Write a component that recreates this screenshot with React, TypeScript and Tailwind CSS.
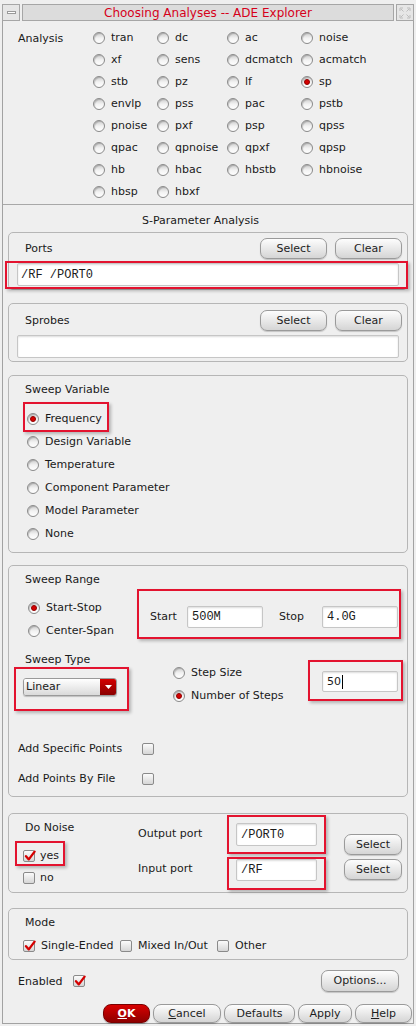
import React from "react";

const ANALYSES: { name: string; on?: boolean }[][] = [
  [{ name: "tran" }, { name: "dc" }, { name: "ac" }, { name: "noise" }],
  [{ name: "xf" }, { name: "sens" }, { name: "dcmatch" }, { name: "acmatch" }],
  [{ name: "stb" }, { name: "pz" }, { name: "lf" }, { name: "sp", on: true }],
  [{ name: "envlp" }, { name: "pss" }, { name: "pac" }, { name: "pstb" }],
  [{ name: "pnoise" }, { name: "pxf" }, { name: "psp" }, { name: "qpss" }],
  [{ name: "qpac" }, { name: "qpnoise" }, { name: "qpxf" }, { name: "qpsp" }],
  [{ name: "hb" }, { name: "hbac" }, { name: "hbstb" }, { name: "hbnoise" }],
  [{ name: "hbsp" }, { name: "hbxf" }],
];

const SWEEP_VARS = ["Frequency", "Design Variable", "Temperature", "Component Parameter", "Model Parameter", "None"];

function Radio({ on }: { on?: boolean }) {
  return (
    <span className="w-[12px] h-[12px] shrink-0 rounded-full border border-[#8a8a8a] bg-linear-to-b from-[#cdcdcd] via-[#f2f2f2] to-white shadow-[inset_1px_1px_1px_rgba(0,0,0,0.18)] flex items-center justify-center">
      {on && <span className="w-[6px] h-[6px] rounded-full bg-[#d60000] border border-[#900000]" />}
    </span>
  );
}

function Check({ on }: { on?: boolean }) {
  return (
    <span className="relative w-[12px] h-[12px] shrink-0 rounded-[2px] border border-[#8a8a8a] bg-linear-to-b from-[#fbfbfb] to-[#d6d6d6]">
      {on && (
        <svg className="absolute left-[0px] top-[-1px]" width="12" height="12" viewBox="0 0 12 12">
          <path d="M2 6.2 L4.8 9.4 L10.6 1.6" stroke="#d40000" strokeWidth="2.3" fill="none" strokeLinecap="round" strokeLinejoin="round" />
        </svg>
      )}
    </span>
  );
}

function Btn({ children, className = "" }: { children: React.ReactNode; className?: string }) {
  return (
    <div
      className={
        "flex items-center justify-center rounded-[7px] border border-[#9a9a9a] bg-linear-to-b from-[#fdfdfd] to-[#d5d5d5] shadow-[0_1px_1px_rgba(0,0,0,0.18)] text-[#1e1e1e] " +
        className
      }
    >
      {children}
    </div>
  );
}

function Field({ children, className = "", mono = true }: { children?: React.ReactNode; className?: string; mono?: boolean }) {
  return (
    <div
      className={
        "flex items-center pl-[3px] bg-white border border-[#c6c6c6] rounded-[2px] shadow-[inset_0_1px_2px_rgba(0,0,0,0.14)] " +
        (mono ? "font-['Liberation_Mono',monospace] text-[12px] " : "") +
        className
      }
    >
      {children}
    </div>
  );
}

function Annot({ className }: { className: string }) {
  return <span className={"pointer-events-none absolute border-2 border-[#e3132f] shadow-[2px_2px_3px_rgba(0,0,0,0.25)] " + className} />;
}

function Frame({ children, className = "" }: { children: React.ReactNode; className?: string }) {
  return <div className={"mx-[5px] border border-[#b6b6b6] rounded-[5px] " + className}>{children}</div>;
}

export default function App() {
  return (
    <div className="w-[416px] h-[1026px] bg-[#efefef] font-['DejaVu_Sans',sans-serif] text-[11px] leading-[14px] text-[#1a1a1a] flex flex-col">
      {/* Title bar */}
      <div className="flex h-[17px] mt-[4px] mx-[2px] gap-[2px]">
        <div className="w-[18px] border border-[#a6a6a6] bg-[#e6e6e6] flex items-center justify-center">
          <div className="w-[9px] h-[3px] border border-[#9a9a9a] bg-white" />
        </div>
        <div className="flex-1 border border-[#a6a6a6] bg-[#dcdcdc] flex items-center justify-center text-[12px] text-[#d6001a]">
          Choosing Analyses -- ADE Explorer
        </div>
        <div className="w-[18px] border border-[#a6a6a6] bg-[#e6e6e6] flex items-center justify-center">
          <svg width="12" height="12" viewBox="0 0 12 12" fill="none" stroke="#bdbdbd" strokeWidth="1">
            <path d="M1 4 V1 H4 M8 1 H11 V4 M11 8 V11 H8 M4 11 H1 V8 M2 2 L4.5 4.5 M10 2 L7.5 4.5 M10 10 L7.5 7.5 M2 10 L4.5 7.5" />
          </svg>
        </div>
      </div>

      {/* Window body */}
      <div className="mx-[2px] h-[1003px] border-x border-b border-[#a2a2a2] flex flex-col">
        {/* Analysis */}
        <div className="h-[184px] pt-[6px] border-b border-[#a8a8a8] flex">
          <div className="w-[90px] pl-[15px] h-[22px] flex items-center pt-[1px]">Analysis</div>
          <div className="grid grid-cols-[64px_70px_74px_auto] auto-rows-[22px]">
            {ANALYSES.flat().map((a) => (
              <div key={a.name} className="flex items-center gap-[6px]">
                <Radio on={a.on} />
                <span>{a.name}</span>
              </div>
            ))}
          </div>
        </div>

        <div className="pt-[9px] pr-[15px] text-center">S-Parameter Analysis</div>

        {/* Ports */}
        <Frame className="mt-[4px] pt-[5px] pb-[3px]">
          <div className="flex items-center h-[21px] pl-[16px] pr-[5px]">
            <span className="flex-1">Ports</span>
            <div className="flex gap-[8px]">
              <Btn className="w-[67px] h-[21px]">Select</Btn>
              <Btn className="w-[67px] h-[21px]">Clear</Btn>
            </div>
          </div>
          <div className="relative mt-[4px] mx-[8px]">
            <Field className="h-[23px]">/RF /PORT0</Field>
            <Annot className="-left-[12px] -top-[2px] w-[403px] h-[28px]" />
          </div>
        </Frame>

        {/* Sprobes */}
        <Frame className="mt-[13px] pt-[6px] pb-[3px]">
          <div className="flex items-center h-[21px] pl-[16px] pr-[5px]">
            <span className="flex-1">Sprobes</span>
            <div className="flex gap-[8px]">
              <Btn className="w-[67px] h-[21px]">Select</Btn>
              <Btn className="w-[67px] h-[21px]">Clear</Btn>
            </div>
          </div>
          <div className="mt-[4px] mx-[8px]">
            <Field className="h-[23px]" />
          </div>
        </Frame>

        {/* Sweep Variable */}
        <Frame className="mt-[13px] pt-[7px] pb-[7px]">
          <div className="pl-[16px] h-[14px]">Sweep Variable</div>
          <div className="mt-[10px]">
            {SWEEP_VARS.map((v, i) => (
              <div key={v} className="relative flex items-center h-[23px] pl-[18px] gap-[6px]">
                <Radio on={i === 0} />
                <span>{v}</span>
                {i === 0 && <Annot className="left-[14px] -top-[5px] w-[86px] h-[30px]" />}
              </div>
            ))}
          </div>
        </Frame>

        {/* Sweep Range */}
        <Frame className="mt-[12px] pt-[7px] pb-[2px]">
          <div className="pl-[16px] h-[14px]">Sweep Range</div>
          <div className="flex h-[55px]">
            <div className="w-[128px] pl-[19px] pt-[9px]">
              <div className="flex items-center h-[23px] gap-[6px]">
                <Radio on />
                <span>Start-Stop</span>
              </div>
              <div className="flex items-center h-[23px] gap-[6px]">
                <Radio />
                <span>Center-Span</span>
              </div>
            </div>
            <div className="mt-[2px] w-[264px] h-[50px] border-2 border-[#e3132f] shadow-[2px_2px_3px_rgba(0,0,0,0.25)] flex items-center pt-[6px] pl-[11px]">
              <span className="w-[37px]">Start</span>
              <Field className="w-[76px] h-[22px] pl-[4px]">500M</Field>
              <span className="ml-[16px] w-[43px]">Stop</span>
              <Field className="w-[76px] h-[22px] pl-[4px]">4.0G</Field>
            </div>
          </div>
          <div className="flex h-[70px]">
            <div className="w-[164px]">
              <div className="mt-[11px] pl-[16px] h-[14px]">Sweep Type</div>
              <div className="relative mt-[11px] ml-[14px] w-[94px] h-[18px]">
                <div className="w-full h-full flex rounded-[3px] border border-[#9a9a9a] overflow-hidden shadow-[0_1px_1px_rgba(0,0,0,0.2)]">
                  <div className="flex-1 bg-linear-to-b from-white to-[#dadada] flex items-center pl-[2px]">Linear</div>
                  <div className="w-[16px] bg-linear-to-b from-[#d40000] to-[#8a0000] flex items-center justify-center">
                    <svg width="7" height="4" viewBox="0 0 7 4">
                      <path d="M0 0 H7 L3.5 4 Z" fill="white" />
                    </svg>
                  </div>
                </div>
                <Annot className="-left-[9px] -top-[11px] w-[115px] h-[44px]" />
              </div>
            </div>
            <div className="w-[149px] pt-[19px]">
              <div className="flex items-center h-[23px] gap-[6px]">
                <Radio />
                <span>Step Size</span>
              </div>
              <div className="flex items-center h-[23px] gap-[6px]">
                <Radio on />
                <span>Number of Steps</span>
              </div>
            </div>
            <div className="relative mt-[29px] w-[76px] h-[21px]">
              <Field mono={false} className="h-[21px] pl-[4px]">
                <span>50</span>
                <span className="ml-[1px] w-[1px] h-[14px] bg-black" />
              </Field>
              <Annot className="-left-[14px] -top-[11px] w-[95px] h-[41px]" />
            </div>
          </div>
          <div className="mt-[22px]">
            <div className="flex items-center h-[30px]">
              <span className="w-[133px] pl-[9px]">Add Specific Points</span>
              <Check />
            </div>
            <div className="flex items-center h-[30px]">
              <span className="w-[133px] pl-[9px]">Add Points By File</span>
              <Check />
            </div>
          </div>
        </Frame>

        {/* Do Noise */}
        <Frame className="mt-[16px] pb-[3px] flex">
          <div className="w-[129px] pt-[7px]">
            <div className="pl-[16px] h-[14px]">Do Noise</div>
            <div className="mt-[10px]">
              <div className="relative flex items-center h-[22px] pl-[14px] gap-[5px]">
                <Check on />
                <span>yes</span>
                <Annot className="left-[6px] -top-[4px] w-[50px] h-[25px]" />
              </div>
              <div className="flex items-center h-[22px] pl-[14px] gap-[5px]">
                <Check />
                <span>no</span>
              </div>
            </div>
          </div>
          <div className="w-[98px]">
            <div className="mt-[13px] h-[14px]">Output port</div>
            <div className="mt-[21px] h-[14px]">Input port</div>
          </div>
          <div className="w-[81px]">
            <div className="relative mt-[9px]">
              <Field className="h-[23px] pl-[4px]">/PORT0</Field>
              <Annot className="-left-[9px] -top-[8px] w-[99px] h-[39px]" />
            </div>
            <div className="relative mt-[13px]">
              <Field className="h-[22px] pl-[4px]">/RF</Field>
              <Annot className="-left-[9px] -top-[2px] w-[99px] h-[33px]" />
            </div>
          </div>
          <div className="ml-[27px]">
            <Btn className="mt-[20px] w-[58px] h-[21px]">Select</Btn>
            <Btn className="mt-[4px] w-[58px] h-[21px]">Select</Btn>
          </div>
        </Frame>

        {/* Mode */}
        <Frame className="mt-[15px] pt-[7px] pb-[3px]">
          <div className="pl-[16px] h-[14px]">Mode</div>
          <div className="mt-[6px] h-[20px] flex items-center pl-[14px]">
            <div className="w-[97px] flex items-center gap-[6px]">
              <Check on />
              <span>Single-Ended</span>
            </div>
            <div className="w-[97px] flex items-center gap-[6px]">
              <Check />
              <span>Mixed In/Out</span>
            </div>
            <div className="flex items-center gap-[6px]">
              <Check />
              <span>Other</span>
            </div>
          </div>
        </Frame>

        {/* Enabled + Options */}
        <div className="mt-[10px] h-[22px] flex items-center pl-[15px] pr-[14px]">
          <span className="w-[55px] pt-[2px]">Enabled</span>
          <Check on />
          <Btn className="ml-auto w-[78px] h-[22px]">Options...</Btn>
        </div>

        {/* Bottom buttons */}
        <div className="mt-[12px] h-[19px] flex justify-end gap-[3px] pr-[1px]">
          <div className="w-[47px] h-[19px] rounded-[8px] border border-[#7a0000] bg-linear-to-b from-[#d80000] to-[#8e0000] shadow-[0_1px_1px_rgba(0,0,0,0.25)] flex items-center justify-center text-white font-bold">
            <span className="underline">O</span>K
          </div>
          <Btn className="w-[68px] h-[19px] rounded-[8px]">
            <span className="underline">C</span>ancel
          </Btn>
          <Btn className="w-[71px] h-[19px] rounded-[8px]">Defaults</Btn>
          <Btn className="w-[54px] h-[19px] rounded-[8px]">Apply</Btn>
          <Btn className="w-[57px] h-[19px] rounded-[8px]">
            <span className="underline">H</span>elp
          </Btn>
        </div>
      </div>
    </div>
  );
}
